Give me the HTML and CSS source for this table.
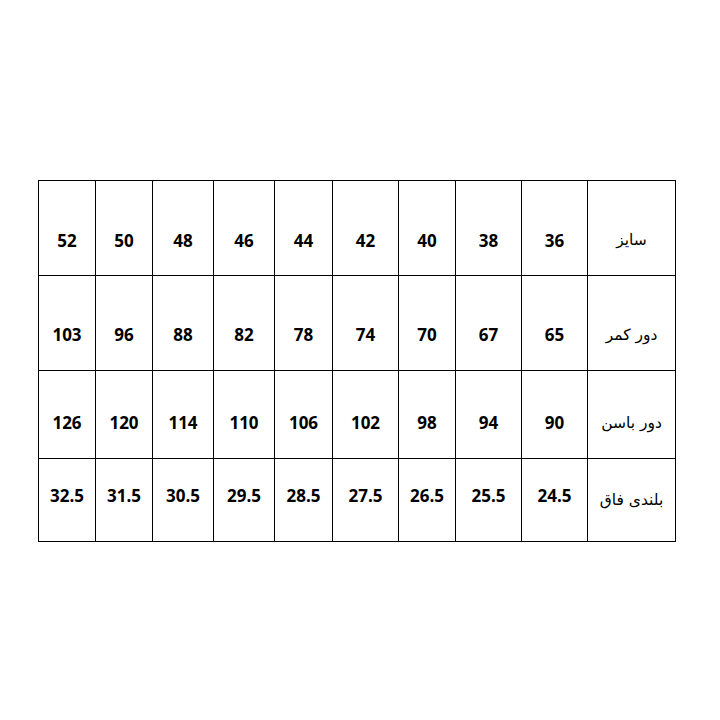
FILE: index.html
```html
<!DOCTYPE html>
<html lang="fa">
<head>
<meta charset="utf-8">
<title>جدول سایز</title>
<link rel="stylesheet" href="styles.css">
</head>
<body>
<div class="sheet">
  <div class="size-table" dir="rtl">
    <div class="row r1">
      <div class="cell label">سایز</div>
      <div class="cell num">36</div><div class="cell num">38</div><div class="cell num">40</div><div class="cell num">42</div><div class="cell num">44</div><div class="cell num">46</div><div class="cell num">48</div><div class="cell num">50</div><div class="cell num">52</div>
    </div>
    <div class="row r2">
      <div class="cell label">دور کمر</div>
      <div class="cell num">65</div><div class="cell num">67</div><div class="cell num">70</div><div class="cell num">74</div><div class="cell num">78</div><div class="cell num">82</div><div class="cell num">88</div><div class="cell num">96</div><div class="cell num">103</div>
    </div>
    <div class="row r3">
      <div class="cell label">دور باسن</div>
      <div class="cell num">90</div><div class="cell num">94</div><div class="cell num">98</div><div class="cell num">102</div><div class="cell num">106</div><div class="cell num">110</div><div class="cell num">114</div><div class="cell num">120</div><div class="cell num">126</div>
    </div>
    <div class="row r4">
      <div class="cell label">بلندی فاق</div>
      <div class="cell num">24.5</div><div class="cell num">25.5</div><div class="cell num">26.5</div><div class="cell num">27.5</div><div class="cell num">28.5</div><div class="cell num">29.5</div><div class="cell num">30.5</div><div class="cell num">31.5</div><div class="cell num">32.5</div>
    </div>
  </div>
</div>
</body>
</html>
```
FILE: styles.css
```css
html, body {
  margin: 0;
  padding: 0;
  background: #ffffff;
}

.sheet {
  width: 720px;
  height: 720px;
  padding: 180px 0 0 38px;
  box-sizing: border-box;
}

.size-table {
  width: 638px;
  display: flex;
  flex-direction: column;
  border-top: 1px solid #000;
  border-right: 1px solid #000;
  box-sizing: border-box;
}

.row {
  display: grid;
  grid-template-columns: 88px 66px 66px 57px 66px 58px 61px 61px 57px 57px;
}

.r1 { height: 95px; }
.r2 { height: 95px; }
.r3 { height: 88px; }
.r4 { height: 83px; }

.cell {
  display: flex;
  align-items: center;
  justify-content: center;
  box-sizing: border-box;
  border-left: 1px solid #000;
  border-bottom: 1px solid #000;
  color: #000;
}

.num {
  direction: ltr;
  font-family: "Open Sans", "DejaVu Sans", sans-serif;
  font-weight: 700;
  font-size: 17px;
}

.label {
  font-family: "DejaVu Sans", "Noto Sans", sans-serif;
  font-weight: 400;
  font-size: 15.5px;
}

.r1 .cell { padding-top: 24px; }
.r2 .cell { padding-top: 23px; }
.r3 .cell { padding-top: 16px; }
.r4 .cell { padding-bottom: 9px; }
.r4 .label { padding-bottom: 0; }
```
